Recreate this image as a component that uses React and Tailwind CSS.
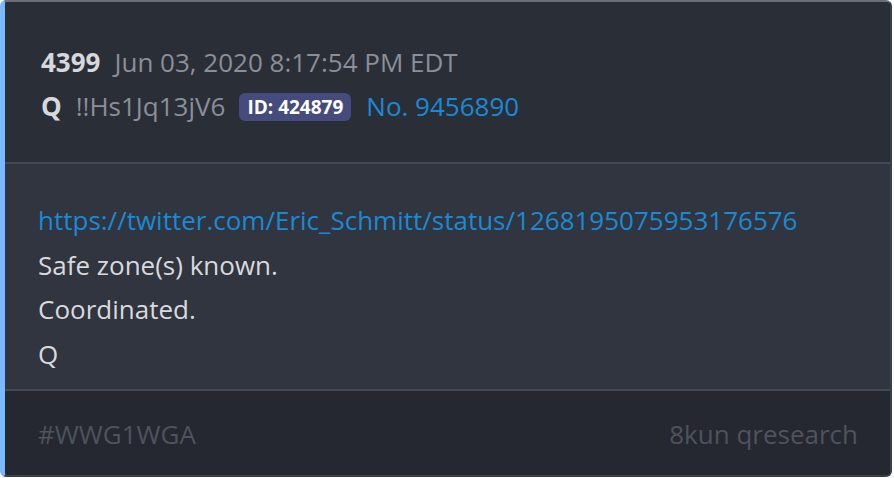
export default function App() {
  return (
    <div className="w-[894px] h-[478px] bg-white p-0" style={{ fontFamily: '"Open Sans", sans-serif' }}>
      <div className="w-[892px] h-[477px] flex flex-col rounded-md overflow-hidden border-l-[5px] border-l-[#7ab9ff] border-t-2 border-t-[#6b6f78] border-r-2 border-r-[#3a3f4a] border-b-2 border-b-[#3a3f4a] bg-[#2a2e37]">
        <div className="h-[160px] bg-[#2a2e37] pl-[36px] pt-[42px] flex flex-col gap-[7px]">
          <div className="flex items-baseline text-[26px] leading-[37px]">
            <span className="font-bold text-[#d6d8dc]">4399</span>
            <span className="ml-[14px] text-[#8a8f99]">Jun 03, 2020 8:17:54 PM EDT</span>
          </div>
          <div className="flex items-center text-[26px] leading-[37px]">
            <span className="font-bold text-[#d6d8dc]">Q</span>
            <span className="ml-[14px] text-[#8a8f99]">!!Hs1Jq13jV6</span>
            <span className="ml-[14px] rounded-md bg-[#454b7c] text-white font-bold text-[19px] leading-[28px] px-[8px]">ID: 424879</span>
            <span className="ml-[15px] text-[#1a8ad4]">No. 9456890</span>
          </div>
        </div>
        <div className="h-[2px] bg-[#444954]" />
        <div className="h-[225px] bg-[#303540] pl-[33px] pt-[34px] flex flex-col text-[26px] leading-[44.5px] text-[#d8dade]">
          <span className="text-[#1a8ad4]">https://twitter.com/Eric_Schmitt/status/1268195075953176576</span>
          <span>Safe zone(s) known.</span>
          <span>Coordinated.</span>
          <span>Q</span>
        </div>
        <div className="h-[2px] bg-[#444954]" />
        <div className="flex-1 bg-[#252830] pl-[33px] pr-[32px] pt-[2px] flex items-center justify-between text-[26px] text-[#4e535e]">
          <span>#WWG1WGA</span>
          <span>8kun qresearch</span>
        </div>
      </div>
    </div>
  );
}
